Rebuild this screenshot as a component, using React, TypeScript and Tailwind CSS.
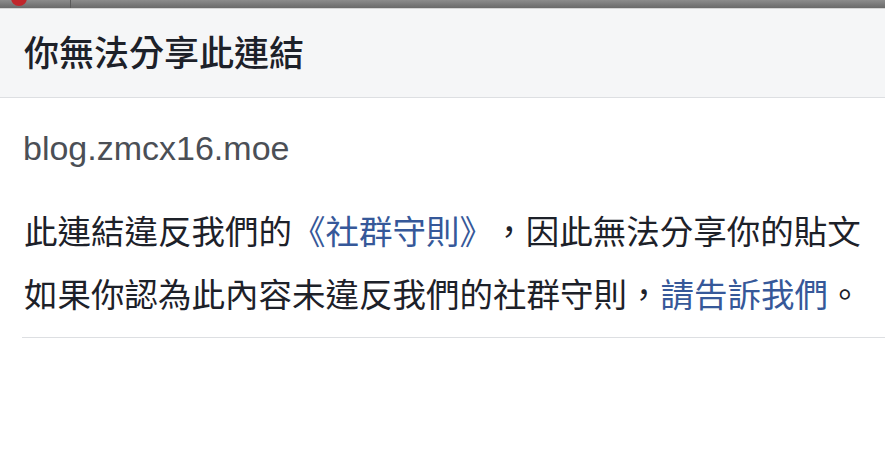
import React from 'react';

export default function App() {
  return (
    <div className="w-[885px] h-[450px] bg-white overflow-hidden font-['Liberation_Sans','Noto_Sans_CJK_TC',sans-serif]">
      <div className="h-[9px] flex bg-gradient-to-b from-[#8c8c8c] to-[#6a6a6a] border-b border-[#d4d4d4]">
        <div className="w-[16px] h-[16px] rounded-full bg-[#c0262b] ml-[11px] -mt-[10px]" />
        <div className="ml-[43px] w-px bg-[#5a5a5a]" />
      </div>
      <div className="h-[89px] bg-[#f5f6f7] border-b border-[#dddfe2] flex items-center px-[24px]">
        <h1 className="text-[35px] font-medium text-[#1d2129] leading-none">你無法分享此連結</h1>
      </div>
      <div className="ml-[22px] border-b border-[#dddfe2] pt-[30px] pb-[10px]">
        <div className="text-[34px] leading-[40px] text-[#4b4f56] pl-[1px]">blog.zmcx16.moe</div>
        <div className="mt-[33px] text-[33.5px] leading-[63px] text-[#1d2129] pl-[2px] whitespace-nowrap">
          <p>
            此連結違反我們的<span className="text-[#365899]">《社群守則》</span>
            <span className="ml-[16px]">，</span>因此無法分享你的貼文
          </p>
          <p>
            如果你認為此內容未違反我們的社群守則，<span className="text-[#365899]">請告訴我們</span>。
          </p>
        </div>
      </div>
    </div>
  );
}
